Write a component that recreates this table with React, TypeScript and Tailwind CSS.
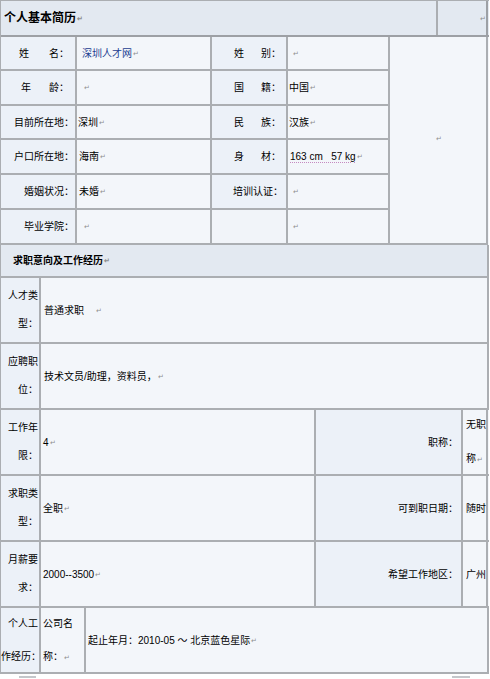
// Resume table (Word export look)
import React from 'react';

const line = 'border-[#abaeb2]';
const labelBg = 'bg-[#ecf1f8]';
const valueBg = 'bg-[#f3f6fa]';

function Mark() {
  return <span className="ml-[1px] text-[7px] leading-none text-[#8e8e8e]">↵</span>;
}

// two-character label spread out, e.g. 姓　　名：
function Spread({ a, b, w }: { a: string; b: string; w: string }) {
  return (
    <span className={`flex justify-between ${w}`}>
      <span>{a}</span>
      <span>{b}：</span>
    </span>
  );
}

function Cell({ className = '', children }: { className?: string; children?: React.ReactNode }) {
  return (
    <div className={`flex items-center border-r-2 border-b-2 ${line} ${className}`}>{children}</div>
  );
}

function SideLabel({ top, bottom, lh = 'leading-[28px]' }: { top: string; bottom: string; lh?: string }) {
  return (
    <div className={`flex w-[40px] shrink-0 flex-col justify-center border-r-2 ${line} ${labelBg} pr-[1px] text-right whitespace-nowrap ${lh}`}>
      <span>{top}</span>
      <span>{bottom}</span>
    </div>
  );
}

function SplitRow({ label, value, tag, tail }: { label: [string, string]; value: string; tag: string; tail: React.ReactNode }) {
  return (
    <div className={`flex h-[66px] border-b-2 ${line}`}>
      <SideLabel top={label[0]} bottom={label[1]} />
      <div className={`flex w-[275px] items-center border-r-2 ${line} pl-[2px]`}>
        {value}
        <Mark />
      </div>
      <div className={`flex w-[147px] items-center justify-end border-r-2 ${line} ${labelBg} pr-[3px]`}>{tag}</div>
      <div className={`flex w-[25px] flex-col justify-center border-r-2 ${line} pl-[3px] whitespace-nowrap`}>{tail}</div>
    </div>
  );
}

export default function App() {
  return (
    <div className="h-[679px] w-[490px] overflow-hidden bg-white font-['Liberation_Sans','Noto_Sans_CJK_SC',sans-serif] text-[10px] text-black">
      <div className={`w-[489px] border-t border-l ${line} ${valueBg}`}>
        {/* title bar */}
        <div className="flex h-[36px] border-b-2 border-[#9da0a5] bg-[#e3e9f1]">
          <div className={`flex w-[437px] items-center border-r-2 ${line} pl-[3px] text-[12px] font-bold`}>
            个人基本简历
            <Mark />
          </div>
          <div className="flex w-[50px] items-center justify-end border-r-2 border-[#9da0a5]">
            <Mark />
          </div>
        </div>

        {/* basic info */}
        <div className="grid grid-cols-[76px_135px_76px_102px_98px] grid-rows-[34px_35px_34px_35px_35px_35px]">
          <Cell className="col-start-5 row-span-6 row-start-1 justify-center pb-[4px]">
            <Mark />
          </Cell>

          <Cell className={`${labelBg} justify-end pr-[6px]`}><Spread a="姓" b="名" w="w-[50px]" /></Cell>
          <Cell className="pl-[5px] text-[#1b3d91]">深圳人才网<Mark /></Cell>
          <Cell className={`${labelBg} justify-end pr-[5px]`}><Spread a="姓" b="别" w="w-[47px]" /></Cell>
          <Cell className="pl-[4px]"><Mark /></Cell>

          <Cell className={`${labelBg} justify-end pr-[6px]`}><Spread a="年" b="龄" w="w-[48px]" /></Cell>
          <Cell className="pl-[6px]"><Mark /></Cell>
          <Cell className={`${labelBg} justify-end pr-[5px]`}><Spread a="国" b="籍" w="w-[47px]" /></Cell>
          <Cell className="pl-[1px]">中国<Mark /></Cell>

          <Cell className={`${labelBg} justify-end pr-[1px]`}>目前所在地：</Cell>
          <Cell className="pl-[1px]">深圳<Mark /></Cell>
          <Cell className={`${labelBg} justify-end pr-[5px]`}><Spread a="民" b="族" w="w-[47px]" /></Cell>
          <Cell className="pl-[1px]">汉族<Mark /></Cell>

          <Cell className={`${labelBg} justify-end pr-[1px]`}>户口所在地：</Cell>
          <Cell className="pl-[2px]">海南<Mark /></Cell>
          <Cell className={`${labelBg} justify-end pr-[5px]`}><Spread a="身" b="材" w="w-[47px]" /></Cell>
          <Cell className="pl-[2px]">
            <span className="underline decoration-[#c58ac0] decoration-dotted underline-offset-2">163 cm&nbsp;&nbsp; 57 kg</span>
            <Mark />
          </Cell>

          <Cell className={`${labelBg} justify-end pr-[1px]`}>婚姻状况：</Cell>
          <Cell className="pl-[2px]">未婚<Mark /></Cell>
          <Cell className={`${labelBg} justify-end pr-[3px]`}>培训认证：</Cell>
          <Cell className="pl-[4px]"><Mark /></Cell>

          <Cell className={`${labelBg} justify-end pr-[1px]`}>毕业学院：</Cell>
          <Cell className="pl-[6px]"><Mark /></Cell>
          <Cell className="bg-[#f1f4f9]" />
          <Cell className="pl-[4px]"><Mark /></Cell>
        </div>

        {/* section header */}
        <div className={`flex h-[33px] items-center border-r-2 border-b-2 ${line} bg-[#e3e9f1] pl-[12px] font-bold`}>
          求职意向及工作经历
          <Mark />
        </div>

        <div className={`flex h-[66px] border-r-2 border-b-2 ${line}`}>
          <SideLabel top="人才类" bottom="型：" />
          <div className="flex items-center pl-[3px]">
            普通求职&nbsp;&nbsp;&nbsp;&nbsp;
            <Mark />
          </div>
        </div>

        <div className={`flex h-[66px] border-r-2 border-b-2 ${line}`}>
          <SideLabel top="应聘职" bottom="位：" />
          <div className="flex items-center pl-[3px]">
            技术文员/助理，资料员，
            <Mark />
          </div>
        </div>

        <SplitRow
          label={['工作年', '限：']}
          value="4"
          tag="职称："
          tail={
            <div className="leading-[34px]">
              <div>无职</div>
              <div>称<Mark /></div>
            </div>
          }
        />
        <SplitRow label={['求职类', '型：']} value="全职" tag="可到职日期：" tail="随时" />
        <SplitRow label={['月薪要', '求：']} value="2000--3500" tag="希望工作地区：" tail="广州" />

        <div className={`flex h-[66px] border-r-2 border-b-2 ${line}`}>
          <SideLabel top="个人工" bottom="作经历：" lh="leading-[33px]" />
          <div className={`flex w-[45px] flex-col justify-center border-r-2 ${line} pl-[2px] leading-[33px] whitespace-nowrap`}>
            <span>公司名</span>
            <span>称：<Mark /></span>
          </div>
          <div className="flex items-center pl-[2px]">
            起止年月：2010-05 ～ 北京蓝色星际
            <Mark />
          </div>
        </div>
      </div>

      {/* top of the next table */}
      <div className="mt-[2px] flex">
        <div className="ml-[19px] h-[2px] w-[17px] bg-[#c4c7cb]" />
        <div className="ml-[416px] h-[2px] w-[18px] bg-[#c4c7cb]" />
      </div>
    </div>
  );
}
